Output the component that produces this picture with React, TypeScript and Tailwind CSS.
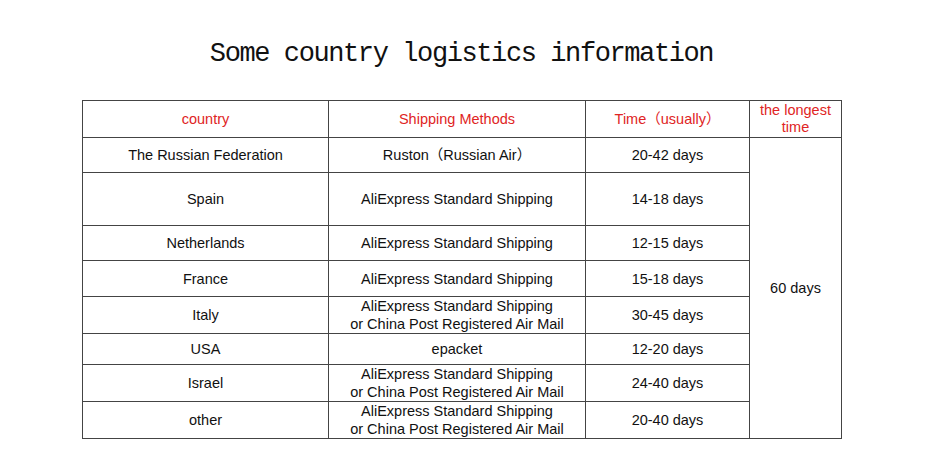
const rows = [
  { country: 'The Russian Federation', method: ['Ruston（Russian Air）'], time: '20-42 days', h: 'h-[35px]' },
  { country: 'Spain', method: ['AliExpress Standard Shipping'], time: '14-18 days', h: 'h-[53px]' },
  { country: 'Netherlands', method: ['AliExpress Standard Shipping'], time: '12-15 days', h: 'h-[35px]' },
  { country: 'France', method: ['AliExpress Standard Shipping'], time: '15-18 days', h: 'h-[36px]' },
  { country: 'Italy', method: ['AliExpress Standard Shipping', 'or China Post Registered Air Mail'], time: '30-45 days', h: 'h-[37px]' },
  { country: 'USA', method: ['epacket'], time: '12-20 days', h: 'h-[31px]' },
  { country: 'Israel', method: ['AliExpress Standard Shipping', 'or China Post Registered Air Mail'], time: '24-40 days', h: 'h-[37px]' },
  { country: 'other', method: ['AliExpress Standard Shipping', 'or China Post Registered Air Mail'], time: '20-40 days', h: 'h-[36px]' },
];

export default function App() {
  return (
    <div className="w-[930px] h-[450px] bg-white">
      <h1 className="pt-[36px] pr-[7px] h-[100px] text-center text-[27px] leading-[36px] tracking-[-1.4px] font-normal text-[#111] font-['Liberation_Mono','Noto_Sans_CJK_SC',monospace]">
        Some country logistics information
      </h1>

      <div className="pl-[82px]">
        <table className="w-[759px] table-fixed border-collapse text-[14.5px] leading-[18px] text-[#111] text-center font-['Liberation_Sans','Noto_Sans_CJK_SC',sans-serif]">
          <colgroup>
            <col className="w-[246px]" />
            <col className="w-[257px]" />
            <col className="w-[164px]" />
            <col className="w-[92px]" />
          </colgroup>
          <thead>
            <tr className="h-[37px] text-[#e02424]">
              <td className="border border-[#444]">country</td>
              <td className="border border-[#444]">Shipping Methods</td>
              <td className="border border-[#444]">Time（usually）</td>
              <td className="border border-[#444] leading-[17px] px-1">the longest time</td>
            </tr>
          </thead>
          <tbody>
            {rows.map((r, i) => (
              <tr key={r.country} className={r.h}>
                <td className="border border-[#444]">{r.country}</td>
                <td className="border border-[#444]">
                  {r.method.map((m) => (
                    <div key={m}>{m}</div>
                  ))}
                </td>
                <td className="border border-[#444]">{r.time}</td>
                {i === 0 && (
                  <td rowSpan={8} className="border border-[#444]">60 days</td>
                )}
              </tr>
            ))}
          </tbody>
        </table>
      </div>
    </div>
  );
}
